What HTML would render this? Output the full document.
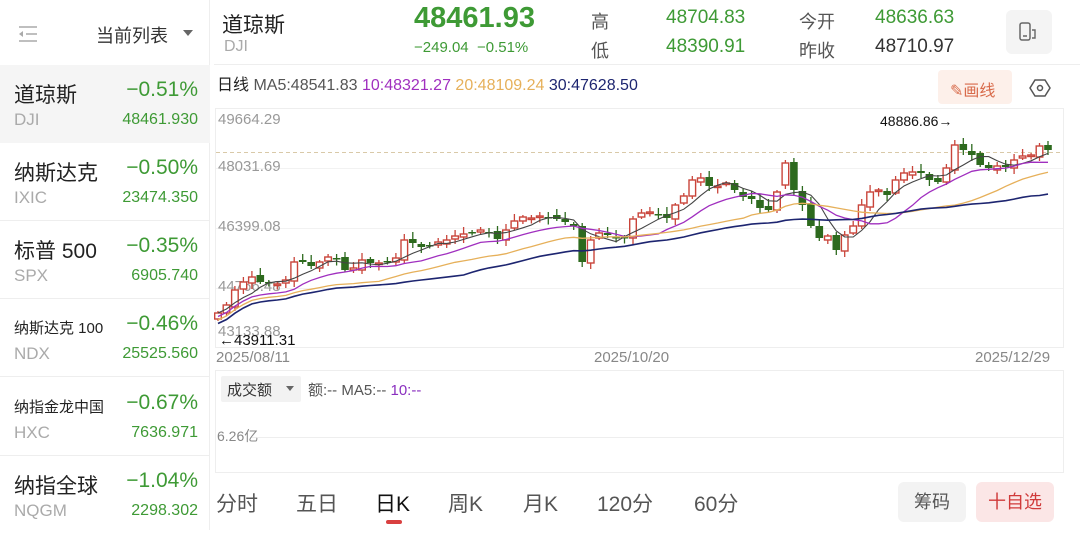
<!DOCTYPE html>
<html><head><meta charset="utf-8"><style>
*{margin:0;padding:0;box-sizing:border-box}
body{width:1080px;height:530px;overflow:hidden;background:#fff;font-family:"Liberation Sans","Noto Sans CJK SC",sans-serif;position:relative;color:#222}
.a{position:absolute;white-space:nowrap}
.g{color:#3e9a35}
.gray{color:#999}
.side{position:absolute;left:0;top:0;width:210px;height:530px;border-right:1px solid #eee}
.row{position:absolute;left:0;width:210px;height:78px;border-bottom:1px solid #eee}
.row .n{position:absolute;left:14px;top:14px;font-size:21px;color:#222}
.row .n.s{font-size:15px;top:18px}
.row .c{position:absolute;left:14px;top:45px;font-size:17px;color:#aaa}
.row .p{position:absolute;right:12px;top:13px;font-size:21px;color:#3e9a35}
.row .v{position:absolute;right:12px;top:46px;font-size:16px;color:#3e9a35}
.tab{position:absolute;top:488px;font-size:21px;color:#555}
</style></head><body>
<div class="side">
 <svg class="a" style="left:16px;top:25px" width="24" height="18"><path d="M3 2h18M10 9h11M3 16h18" stroke="#aaa" stroke-width="1.5"/><path d="M7 6l-4 3 4 3z" fill="#aaa"/></svg>
 <div class="a" style="left:96px;top:22px;font-size:18px;color:#333">当前列表</div>
 <svg class="a" style="left:182px;top:29px" width="12" height="8"><path d="M1 1h10L6 7z" fill="#666"/></svg>
 <div class="row" style="top:65px;background:#f5f5f5;border-bottom:none"><div class="n">道琼斯</div><div class="c">DJI</div><div class="p">−0.51%</div><div class="v">48461.930</div></div>
 <div class="row" style="top:143px"><div class="n">纳斯达克</div><div class="c">IXIC</div><div class="p">−0.50%</div><div class="v">23474.350</div></div>
 <div class="row" style="top:221px"><div class="n">标普 500</div><div class="c">SPX</div><div class="p">−0.35%</div><div class="v">6905.740</div></div>
 <div class="row" style="top:299px"><div class="n s">纳斯达克 100</div><div class="c">NDX</div><div class="p">−0.46%</div><div class="v">25525.560</div></div>
 <div class="row" style="top:378px"><div class="n s">纳指金龙中国</div><div class="c">HXC</div><div class="p">−0.67%</div><div class="v">7636.971</div></div>
 <div class="row" style="top:456px;border-bottom:none"><div class="n">纳指全球</div><div class="c">NQGM</div><div class="p">−1.04%</div><div class="v">2298.302</div></div>
</div>
<div class="a" style="left:214px;top:64px;width:866px;border-top:1px solid #eee"></div>
<div class="a" style="left:222px;top:9px;font-size:21px">道琼斯</div>
<div class="a" style="left:224px;top:38px;font-size:16px;color:#aaa">DJI</div>
<div class="a g" style="left:414px;top:2px;font-size:29px;font-weight:bold">48461.93</div>
<div class="a g" style="left:414px;top:39px;font-size:15px">−249.04 &nbsp;−0.51%</div>
<div class="a" style="left:591px;top:8px;font-size:18px;color:#555">高</div>
<div class="a" style="left:591px;top:37px;font-size:18px;color:#555">低</div>
<div class="a g" style="left:666px;top:7px;font-size:19px">48704.83</div>
<div class="a g" style="left:666px;top:36px;font-size:19px">48390.91</div>
<div class="a" style="left:799px;top:8px;font-size:18px;color:#555">今开</div>
<div class="a" style="left:799px;top:37px;font-size:18px;color:#555">昨收</div>
<div class="a g" style="left:875px;top:7px;font-size:19px">48636.63</div>
<div class="a" style="left:875px;top:36px;font-size:19px;color:#333">48710.97</div>
<div class="a" style="left:1006px;top:10px;width:46px;height:44px;background:#f4f4f4;border-radius:6px"></div>
<svg class="a" style="left:1017px;top:21px" width="24" height="22"><rect x="3" y="2" width="10" height="17" rx="2" fill="none" stroke="#666" stroke-width="1.5"/><path d="M6 15h4" stroke="#666" stroke-width="1.5"/><path d="M15 9h3v8h-3" fill="none" stroke="#666" stroke-width="1.4"/></svg>

<div class="a" style="left:217px;top:71px;font-size:16px;color:#222">日线 <span style="color:#555">MA5:48541.83</span> <span style="color:#a02fbf">10:48321.27</span> <span style="color:#e6b05a">20:48109.24</span> <span style="color:#1d2570">30:47628.50</span></div>
<div class="a" style="left:938px;top:70px;width:74px;height:34px;background:#fdf0ea;border-radius:4px"></div>
<div class="a" style="left:950px;top:77px;font-size:16px;color:#d86a4a">✎画线</div>
<svg class="a" style="left:1029px;top:77px" width="22" height="22"><path d="M6 3h10l5 8-5 8H6L1 11z" fill="none" stroke="#555" stroke-width="1.5"/><circle cx="11" cy="11" r="2.5" fill="none" stroke="#555" stroke-width="1.5"/></svg>

<svg class="a" style="left:0;top:0" width="1080" height="530" id="ch">
 <rect x="215.5" y="108.5" width="848" height="239" fill="none" stroke="#eee"/>
 <path d="M216 168.5H1063M216 228.5H1063M216 288.5H1063" stroke="#f2f2f2"/>
 <path d="M216 152.5H1063" stroke="#d9c9a8" stroke-dasharray="4 3"/>
 <g font-size="15" fill="#999" font-family="Liberation Sans">
  <text x="218" y="124">49664.29</text><text x="218" y="171">48031.69</text><text x="218" y="231">46399.08</text><text x="218" y="291">44766.48</text><text x="218" y="336">43133.88</text>
 </g>
 <g id="cd"></g>
 <text x="880" y="126" font-size="14" fill="#111" font-family="Liberation Sans">48886.86→</text>
 <text x="219" y="345" font-size="15" fill="#111" font-family="Liberation Sans">←43911.31</text>
 <g font-size="15" fill="#888" font-family="Liberation Sans"><text x="216" y="362">2025/08/11</text><text x="594" y="362">2025/10/20</text><text x="975" y="362">2025/12/29</text></g>
 <rect x="215.5" y="370.5" width="848" height="102" fill="none" stroke="#eee"/>
 <path d="M250 437.5H1063" stroke="#eee"/>
 <rect x="221" y="376" width="80" height="26" fill="#f2f2f2" rx="2"/>
 <text x="227" y="395" font-size="15" fill="#333" font-family="Liberation Sans,Noto Sans CJK SC">成交额</text>
 <path d="M286 386h8l-4 5z" fill="#666"/>
 <text x="308" y="395" font-size="15" fill="#555" font-family="Liberation Sans,Noto Sans CJK SC">额:--  MA5:--  <tspan fill="#8a2fbf">10:--</tspan></text>
 <text x="217" y="441" font-size="14" fill="#888" font-family="Liberation Sans,Noto Sans CJK SC">6.26亿</text>
</svg>

<div class="tab" style="left:216px">分时</div>
<div class="tab" style="left:296px">五日</div>
<div class="tab" style="left:375px;color:#111">日K</div>
<div class="a" style="left:386px;top:520px;width:16px;height:4px;background:#d94040;border-radius:2px"></div>
<div class="tab" style="left:448px">周K</div>
<div class="tab" style="left:523px">月K</div>
<div class="tab" style="left:597px">120分</div>
<div class="tab" style="left:694px">60分</div>
<div class="a" style="left:898px;top:482px;width:68px;height:40px;background:#f3f3f3;border-radius:6px;font-size:18px;color:#555;text-align:center;line-height:40px">筹码</div>
<div class="a" style="left:976px;top:482px;width:78px;height:40px;background:#fbe6e6;border-radius:6px;font-size:18px;color:#d03a3a;text-align:center;line-height:40px">十自选</div>

<script>
var ys=[313,305,290,282,277,282,283,284,280,262,262,266,262,257,259,270,268,260,263,263,262,258,240,243,247,245,242,240,236,234,232,230,232,239,230,221,217,218,216,217,219,222,226,262,240,233,235,238,237,219,213,212,215,218,205,196,180,178,186,186,183,190,197,199,208,210,192,163,190,205,226,238,236,250,235,226,205,192,190,195,180,173,172,173,180,182,168,145,150,155,165,168,166,167,160,156,155,146,150];
var x0=218,x1=1048,n=ys.length,dx=(x1-x0)/(n-1),h='';
var G='#2d6a1e',R='#c9443a';
for(var i=0;i<n;i++){var x=x0+i*dx,c=ys[i],o=i?ys[i-1]+((i*7)%5-2):c+6;
 if(i==43)o=226; if(i==67)o=185;
 var up=c<o,t=Math.min(o,c),b=Math.max(o,c);if(b-t<1.5)b=t+1.5;
 var wt=t-2-(i*13%6),wb=b+2+(i*11%5);
 var col=up?R:G;
 h+='<line x1="'+x.toFixed(1)+'" x2="'+x.toFixed(1)+'" y1="'+wt+'" y2="'+wb+'" stroke="'+col+'" stroke-width="1.3"/>';
 if(up)h+='<rect x="'+(x-3.3).toFixed(1)+'" y="'+t+'" width="6.6" height="'+(b-t)+'" fill="#fff" stroke="'+col+'" stroke-width="1.4"/>';
 else h+='<rect x="'+(x-3.8).toFixed(1)+'" y="'+t+'" width="7.6" height="'+(b-t)+'" fill="'+col+'"/>';}
function ma(k,col,w,off){var p='';for(var i=0;i<n;i++){var s=0,m=0;for(var j=Math.max(0,i-k+1);j<=i;j++){s+=ys[j];m++;}var v=s/m+off*(1-Math.min(1,i/k));p+=(i?'L':'M')+(x0+i*dx).toFixed(1)+' '+(s/m+ (k>5?k*0.35:0)).toFixed(1);}
 return '<path d="'+p+'" fill="none" stroke="'+col+'" stroke-width="'+w+'"/>';}
h+=ma(5,'#444',1.1,0)+ma(10,'#a02fbf',1.3,0)+ma(20,'#e6b05a',1.3,0)+ma(30,'#1d2570',1.6,0);
document.getElementById('cd').innerHTML=h;
</script>
</body></html>
